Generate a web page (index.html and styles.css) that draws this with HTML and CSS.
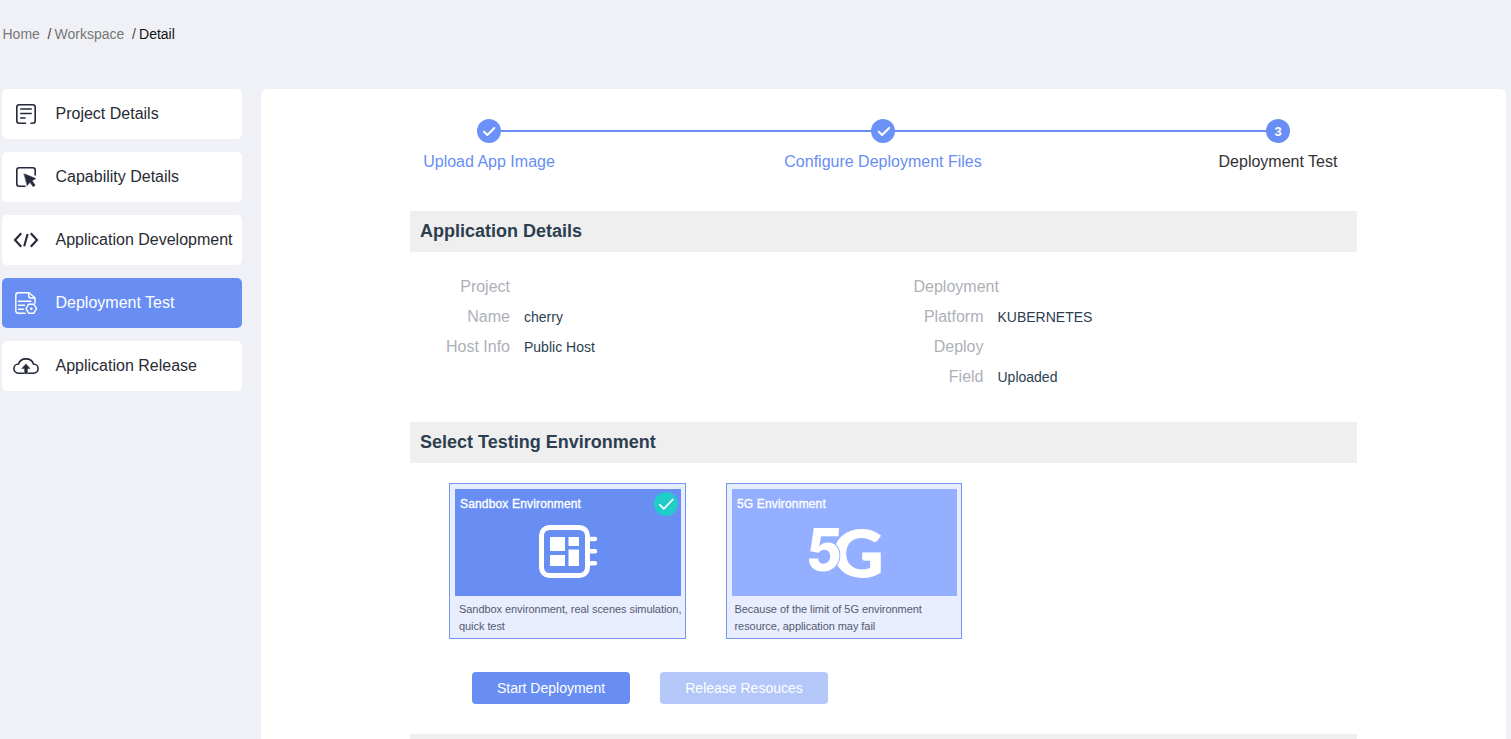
FILE: index.html
```html
<!DOCTYPE html>
<html lang="en">
<head>
<meta charset="utf-8">
<title>Workspace Detail</title>
<link rel="stylesheet" href="styles.css">
</head>
<body>
<nav class="breadcrumb"><span class="home">Home</span><span class="sep">/</span><span class="workspace">Workspace</span><span class="sep">/</span><span class="current">Detail</span></nav>
<div class="layout">
  <aside class="sidebar">
    <a class="item"><svg class="icon" viewBox="0 0 28 28"><path d="M13.5 23.2H7.2Q4.8 23.2 4.8 20.8V7.2Q4.8 4.8 7.2 4.8H20.8Q23.2 4.8 23.2 7.2V20.8Q23.2 23.2 20.8 23.2H19M8.8 9H19.2M8.8 13.5H19.2M8.8 18H13"/></svg><span>Project Details</span></a>
    <a class="item"><svg class="icon" viewBox="0 0 28 28"><path d="M13 23.2H7.2Q4.8 23.2 4.8 20.8V7.2Q4.8 4.8 7.2 4.8H20.8Q23.2 4.8 23.2 7.2V12"/><path class="solid" d="M12.2 10.8L23.8 15.6L20.1 17.7L23.2 22.2L21.1 23.7L18 19.3L15.2 22.4Z"/></svg><span>Capability Details</span></a>
    <a class="item"><svg class="icon bold" viewBox="0 0 28 28"><path d="M9.2 7.2L3 14L9.2 20.8M15.6 8L12.2 20.3M18.8 7.2L25 14L18.8 20.8"/></svg><span>Application Development</span></a>
    <a class="item active"><svg class="icon" viewBox="0 0 28 28"><path d="M13.2 24.2H6.2Q3.8 24.2 3.8 21.8V6.2Q3.8 3.8 6.2 3.8H17L23 8.8V14.2M16.7 4V7Q16.7 9 18.7 9H23M6.5 12.2H18.8M6.5 16.2H12.5M6.5 20.2H11.5"/><path d="M16.7 15.2H21.8L24.6 19.7L21.8 24.2H16.7L14 19.7Z"/><circle class="solid" cx="19.3" cy="19.7" r="1"/></svg><span>Deployment Test</span></a>
    <a class="item"><svg class="icon" viewBox="0 0 28 28"><path d="M11.5 21.2H6.4A4.6 4.6 0 0 1 6.6 12Q8 6.9 14 6.9T21.4 12A4.6 4.6 0 0 1 21.6 21.2H16.5"/><path class="solid" d="M14 12L18 16.6H15.4V21.7H12.6V16.6H10Z"/></svg><span>Application Release</span></a>
  </aside>
  <main class="panel">
    <div class="content">
      <ol class="steps">
        <li class="step"><span class="dot done"><svg viewBox="0 0 24 24"><path d="M7 12.7L10.3 16L17.4 9"/></svg></span><span class="title">Upload App Image</span></li>
        <li class="step"><span class="dot done"><svg viewBox="0 0 24 24"><path d="M7.8 12.7L11.1 16L18.2 9"/></svg></span><span class="title">Configure Deployment Files</span></li>
        <li class="step now"><span class="dot">3</span><span class="title">Deployment Test</span></li>
      </ol>
      <h2 class="heading">Application Details</h2>
      <div class="details">
        <dl class="column">
          <dt>Project Name</dt><dd>cherry</dd>
          <dt>Host Info</dt><dd>Public Host</dd>
        </dl>
        <dl class="column">
          <dt>Deployment Platform</dt><dd>KUBERNETES</dd>
          <dt>Deploy Field</dt><dd>Uploaded</dd>
        </dl>
      </div>
      <h2 class="heading">Select Testing Environment</h2>
      <div class="cards">
        <section class="card sandbox">
          <div class="cover">
            <h3>Sandbox Environment</h3>
            <svg class="art" viewBox="0 0 226 107"><rect class="frame" x="86.5" y="38.5" width="46" height="48" rx="8"/><path class="pins" d="M136 50H140M136 62.3H140M136 74.3H140"/><path class="fill" d="M95 48H110V62H95ZM113.5 48H124V57H113.5ZM95 66H110V77H95ZM113.5 60.5H124V77H113.5Z"/></svg>
            <svg class="check" viewBox="0 0 24 24"><circle cx="12" cy="12" r="12"/><path d="M5.3 12.3L9.8 16.8L19.2 7.2"/></svg>
          </div>
          <p>Sandbox environment, real scenes simulation,<br>quick test</p>
        </section>
        <section class="card five">
          <div class="cover">
            <h3>5G Environment</h3>
            <svg class="art" viewBox="0 0 225 107"><g class="logo"><text class="letter" x="100.5" y="88.3" textLength="51" lengthAdjust="spacingAndGlyphs">G</text><text class="digit" transform="translate(73 81.6) skewX(-4)" textLength="35.5" lengthAdjust="spacingAndGlyphs">5</text></g></svg>
          </div>
          <p>Because of the limit of 5G environment<br>resource, application may fail</p>
        </section>
      </div>
      <div class="actions"><button class="start">Start Deployment</button><button class="release" disabled>Release Resouces</button></div>
      <div class="heading"></div>
    </div>
  </main>
</div>
</body>
</html>
```
FILE: styles.css
```css
* { box-sizing: border-box; }
body { margin: 0; height: 739px; overflow: hidden; background: #f0f1f6; font-family: "Liberation Sans", Arial, sans-serif; color: #2c3e50; }
.breadcrumb { height: 89px; padding: 24px 0 0 2.5px; font-size: 14px; line-height: 20px; color: #777; white-space: nowrap; }
.sep { display: inline-block; width: 8px; margin-left: 6.7px; padding-left: 1px; color: #444; }
.current { color: #111; }
.layout { display: flex; align-items: flex-start; gap: 19px; padding: 0 5px 0 2px; }
.sidebar { flex: 0 0 240px; display: flex; flex-direction: column; gap: 13px; }
.item { display: flex; align-items: center; height: 50px; padding-left: 10px; border-radius: 5px; background: #fff; color: #282b33; font-size: 16px; white-space: nowrap; }
.item span { margin-left: 15.5px; line-height: 20px; }
.item.active { background: #688ef3; color: #fff; }
.icon { width: 28px; height: 28px; fill: none; stroke: currentColor; stroke-width: 1.6; }
.icon { flex: none; color: #24283a; stroke-linecap: round; stroke-linejoin: round; }
.active .icon { color: #fff; stroke-width: 1.4; }
.icon.bold { stroke-width: 2.1; stroke-linecap: butt; stroke-linejoin: miter; }
.icon .solid { fill: currentColor; stroke-width: .5; }
.panel { flex: 1; height: 660px; padding: 30px 149px 0; border-radius: 6px; background: #fff; }
.content { width: 947px; }
.steps { display: grid; grid-template-columns: 158px 158px 158px; column-gap: 236px; height: 92px; margin: 0; padding: 0; list-style: none; background: linear-gradient(#688ef3, #688ef3) 79px 11px / 789px 2px no-repeat; }
.step { display: flex; flex-direction: column; align-items: center; color: #688ef3; font-size: 16px; }
.step.now { margin: 0 -1px 0 1px; color: #303133; }
.dot { display: flex; align-items: center; justify-content: center; width: 24px; height: 24px; border-radius: 50%; background: #688ef3; color: #fff; font-size: 13px; font-weight: bold; }
.dot.done { background: #6c92fa; }
.dot svg { width: 24px; height: 24px; fill: none; stroke: #fff; stroke-width: 2; stroke-linecap: round; stroke-linejoin: round; }
.title { margin-top: 9px; line-height: 20px; white-space: nowrap; }
.heading { height: 41px; margin: 0; padding-left: 10px; background: #efefef; font-size: 18px; font-weight: bold; line-height: 40px; }
.details { display: grid; grid-template-columns: 473.5px 473.5px; height: 170px; padding-top: 20px; }
.column { display: grid; grid-template-columns: 70px auto; column-gap: 14px; align-content: start; align-items: end; margin: 0; padding-left: 30px; }
.column dt { color: #aeb0b8; font-size: 16px; line-height: 30px; text-align: right; }
.column dd { margin: 0; font-size: 14px; line-height: 30px; }
.cards { display: flex; gap: 40px; padding: 20px 39px 0; }
.card { width: 237px; height: 156px; padding: 5px 4px 0 5px; border: 1px solid #7597f1; background: #e8edff; }
.card.five { width: 236px; }
.cover { position: relative; height: 107px; background: #688ef3; }
.five .cover { background: #94afff; }
.cover h3 { margin: 0; padding: 7px 0 0 5px; color: #fff; font-size: 12px; line-height: 16px; font-weight: normal; letter-spacing: .16px; -webkit-text-stroke: .35px #fff; white-space: nowrap; }
.art { position: absolute; inset: 0; width: 100%; height: 107px; fill: #fff; }
.frame { fill: none; stroke: #fff; stroke-width: 5; }
.pins { stroke: #fff; stroke-width: 4.5; stroke-linecap: round; }
.check { position: absolute; right: 3px; top: 3px; width: 24px; height: 24px; fill: #20cdc8; }
.check path { fill: none; stroke: #fff; stroke-width: 1.7; }
.logo { font-weight: 900; }
.digit { font-family: Inter, sans-serif; font-weight: 800; font-size: 59px; stroke: #94afff; stroke-width: 2; paint-order: stroke; }
.letter { font-family: Lato, sans-serif; font-size: 65px; stroke: #fff; stroke-width: .8; }
.card p { margin: 4px 0 0; padding: .5px 0 0 4px; color: #555b6e; font-size: 11px; line-height: 17px; white-space: nowrap; letter-spacing: -.06px; }
.five p { padding-left: 2.5px; }
.actions { display: flex; gap: 30px; height: 95px; padding: 33px 62px 0; }
.actions button { width: 158px; height: 32px; padding: 0; border: 0; border-radius: 4px; background: #688ef3; color: #fff; font: 14px "Liberation Sans", Arial, sans-serif; }
.actions .release { width: 168px; background: #b4c7f9; }
```
